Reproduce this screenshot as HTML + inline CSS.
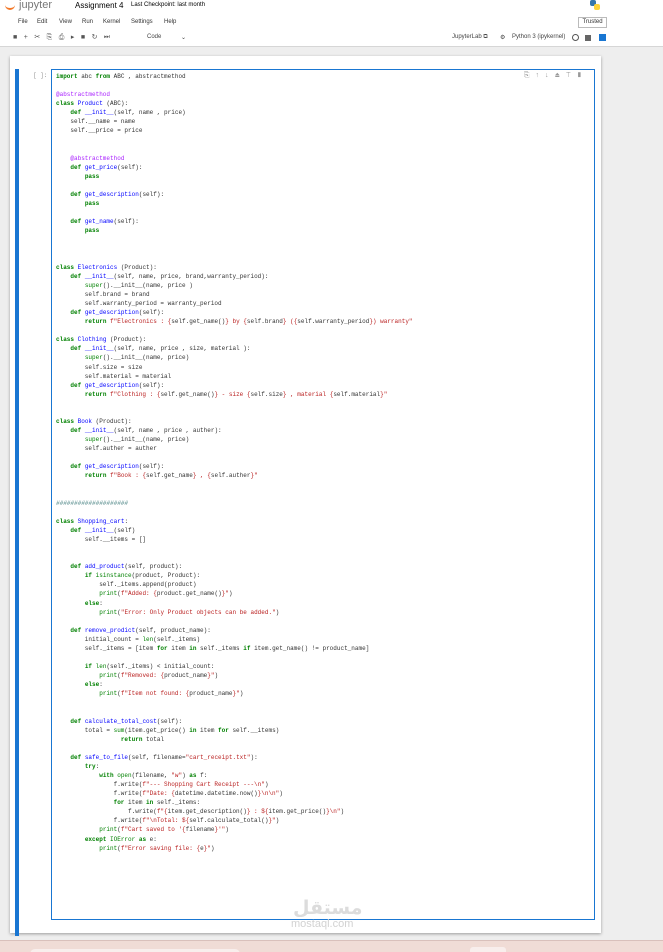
<!DOCTYPE html>
<html><head><meta charset="utf-8">
<style>
*{margin:0;padding:0;box-sizing:border-box}
html,body{width:663px;height:952px;overflow:hidden;background:#eeeeee;font-family:"Liberation Sans",sans-serif;position:relative}
.top{position:absolute;left:0;top:0;width:663px;height:47px;background:#fff;border-bottom:1px solid #d6d6d6}
.abs{position:absolute;white-space:nowrap}
.menu span{position:absolute;font-size:6px;color:#333;top:19px}
.tb{font-size:6px;color:#444;top:34px}
.panel{position:absolute;left:10px;top:56px;width:591px;height:877px;background:#fff;box-shadow:0 1px 3px rgba(0,0,0,.35)}
.bar{position:absolute;left:15px;top:69px;width:4px;height:867px;background:#1976d2}
.ed{position:absolute;left:51px;top:69px;width:544px;height:851px;border:1px solid #1976d2;background:#fff}
pre{position:absolute;left:4px;top:2px;font-family:"Liberation Mono",monospace;font-size:6px;line-height:9.08px;color:#333}
.k{color:#008000;font-weight:bold}.f{color:#0000ff}.s{color:#ba2121}.d{color:#aa22ff}.c{color:#3d7b7b;font-style:italic}.b{color:#008000}
.bottom{position:absolute;left:0;top:940px;width:663px;height:12px;background:#f0dcd6;border-top:1px solid #d9c0bb}
</style></head><body>
<div class="top">
  <div class="abs" style="left:5px;top:1px;width:10px;height:9px;border-bottom:2px solid #f37726;border-radius:0 0 6px 6px"></div>
  <div class="abs" style="left:19px;top:-1px;font-size:11px;color:#777">jupyter</div>
  <div class="abs" style="left:75px;top:1px;font-size:8px;color:#000">Assignment 4</div>
  <div class="abs" style="left:131px;top:2px;font-size:6px;color:#000">Last Checkpoint: last month</div>
  <div class="abs" style="left:590px;top:0px;width:6px;height:6px;background:#3776ab;border-radius:2px"></div>
  <div class="abs" style="left:594px;top:4px;width:6px;height:6px;background:#ffd43b;border-radius:2px"></div>
  <div class="menu"><span style="left:18px">File</span><span style="left:37px">Edit</span><span style="left:59px">View</span><span style="left:82px">Run</span><span style="left:103px">Kernel</span><span style="left:131px">Settings</span><span style="left:164px">Help</span></div>
  <div class="abs" style="left:578px;top:17px;width:29px;height:11px;border:1px solid #bbb;font-size:6px;color:#333;text-align:center;line-height:9px">Trusted</div>
  <div class="abs tb" style="left:13px;top:33px;font-size:7px;letter-spacing:6.5px;color:#555">■+✂⎘⎙▸■↻⏭</div>
  <div class="abs tb" style="left:147px">Code</div>
  <div class="abs tb" style="left:181px">⌄</div>
  <div class="abs tb" style="left:452px">JupyterLab ⧉</div>
  <div class="abs tb" style="left:500px">⚙</div>
  <div class="abs tb" style="left:512px">Python 3 (ipykernel)</div>
  <div class="abs" style="left:572px;top:34px;width:7px;height:7px;border:1px solid #555;border-radius:50%"></div>
  <div class="abs" style="left:585px;top:35px;width:6px;height:6px;background:#666"></div>
  <div class="abs" style="left:599px;top:34px;width:7px;height:7px;background:#1976d2"></div>
</div>
<div class="panel"></div>
<div class="bar"></div>
<div class="abs" style="left:33px;top:72px;font-family:'Liberation Mono',monospace;font-size:6px;color:#999">[ ]:</div>
<div class="ed">
<div class="abs" style="right:6px;top:2px;font-size:7px;color:#999;letter-spacing:6px">⎘↑↓⏏⊤▮</div>
<pre><span class="k">import</span> abc <span class="k">from</span> ABC , abstractmethod

<span class="d">@abstractmethod</span>
<span class="k">class</span> <span class="f">Product</span> (ABC):
    <span class="k">def</span> <span class="f">__init__</span>(self, name , price)
    self.__name = name
    self.__price = price


    <span class="d">@abstractmethod</span>
    <span class="k">def</span> <span class="f">get_price</span>(self):
        <span class="k">pass</span>

    <span class="k">def</span> <span class="f">get_description</span>(self):
        <span class="k">pass</span>

    <span class="k">def</span> <span class="f">get_name</span>(self):
        <span class="k">pass</span>



<span class="k">class</span> <span class="f">Electronics</span> (Product):
    <span class="k">def</span> <span class="f">__init__</span>(self, name, price, brand,warranty_period):
        <span class="b">super</span>().__init__(name, price )
        self.brand = brand
        self.warranty_period = warranty_period
    <span class="k">def</span> <span class="f">get_description</span>(self):
        <span class="k">return</span> <span class="s">f"Electronics : {</span>self.get_name()<span class="s">} by {</span>self.brand<span class="s">} ({</span>self.warranty_period<span class="s">}) warranty"</span>

<span class="k">class</span> <span class="f">Clothing</span> (Product):
    <span class="k">def</span> <span class="f">__init__</span>(self, name, price , size, material ):
        <span class="b">super</span>().__init__(name, price)
        self.size = size
        self.material = material
    <span class="k">def</span> <span class="f">get_description</span>(self):
        <span class="k">return</span> <span class="s">f"Clothing : {</span>self.get_name()<span class="s">} - size {</span>self.size<span class="s">} , material {</span>self.material<span class="s">}"</span>


<span class="k">class</span> <span class="f">Book</span> (Product):
    <span class="k">def</span> <span class="f">__init__</span>(self, name , price , auther):
        <span class="b">super</span>().__init__(name, price)
        self.auther = auther

    <span class="k">def</span> <span class="f">get_description</span>(self):
        <span class="k">return</span> <span class="s">f"Book : {</span>self.get_name<span class="s">} , {</span>self.auther<span class="s">}"</span>


<span class="c">####################</span>

<span class="k">class</span> <span class="f">Shopping_cart</span>:
    <span class="k">def</span> <span class="f">__init__</span>(self)
        self.__items = []


    <span class="k">def</span> <span class="f">add_product</span>(self, product):
        <span class="k">if</span> <span class="b">isinstance</span>(product, Product):
            self._items.append(product)
            <span class="b">print</span>(<span class="s">f"Added: {</span>product.get_name()<span class="s">}"</span>)
        <span class="k">else</span>:
            <span class="b">print</span>(<span class="s">"Error: Only Product objects can be added."</span>)

    <span class="k">def</span> <span class="f">remove_prodict</span>(self, product_name):
        initial_count = <span class="b">len</span>(self._items)
        self._items = [item <span class="k">for</span> item <span class="k">in</span> self._items <span class="k">if</span> item.get_name() != product_name]

        <span class="k">if</span> <span class="b">len</span>(self._items) &lt; initial_count:
            <span class="b">print</span>(<span class="s">f"Removed: {</span>product_name<span class="s">}"</span>)
        <span class="k">else</span>:
            <span class="b">print</span>(<span class="s">f"Item not found: {</span>product_name<span class="s">}"</span>)


    <span class="k">def</span> <span class="f">calculate_total_cost</span>(self):
        total = <span class="b">sum</span>(item.get_price() <span class="k">in</span> item <span class="k">for</span> self.__items)
                  <span class="k">return</span> total

    <span class="k">def</span> <span class="f">safe_to_file</span>(self, filename=<span class="s">"cart_receipt.txt"</span>):
        <span class="k">try</span>:
            <span class="k">with</span> <span class="b">open</span>(filename, <span class="s">"w"</span>) <span class="k">as</span> f:
                f.write(<span class="s">f"--- Shopping Cart Receipt ---\n"</span>)
                f.write(<span class="s">f"Date: {</span>datetime.datetime.now()<span class="s">}\n\n"</span>)
                <span class="k">for</span> item <span class="k">in</span> self._items:
                    f.write(<span class="s">f"{</span>item.get_description()<span class="s">} : ${</span>item.get_price()<span class="s">}\n"</span>)
                f.write(<span class="s">f"\nTotal: ${</span>self.calculate_total()<span class="s">}"</span>)
            <span class="b">print</span>(<span class="s">f"Cart saved to '{</span>filename<span class="s">}'"</span>)
        <span class="k">except</span> <span class="b">IOError</span> <span class="k">as</span> e:
            <span class="b">print</span>(<span class="s">f"Error saving file: {</span>e<span class="s">}"</span>)
</pre>
</div>
<div class="abs" style="left:293px;top:893px;font-family:'Noto Sans CJK SC','DejaVu Sans',sans-serif;font-size:19px;font-weight:bold;color:#dcdcdc">مستقل</div>
<div class="abs" style="left:291px;top:918px;font-size:11px;color:#d2d2d2">mostaql.com</div>
<div class="bottom">
  <div class="abs" style="left:30px;top:8px;width:210px;height:10px;background:#f8eeec;border-radius:5px"></div>
  <div class="abs" style="left:470px;top:6px;width:36px;height:10px;background:#f8eeec;border-radius:3px"></div>
</div>
</body></html>
